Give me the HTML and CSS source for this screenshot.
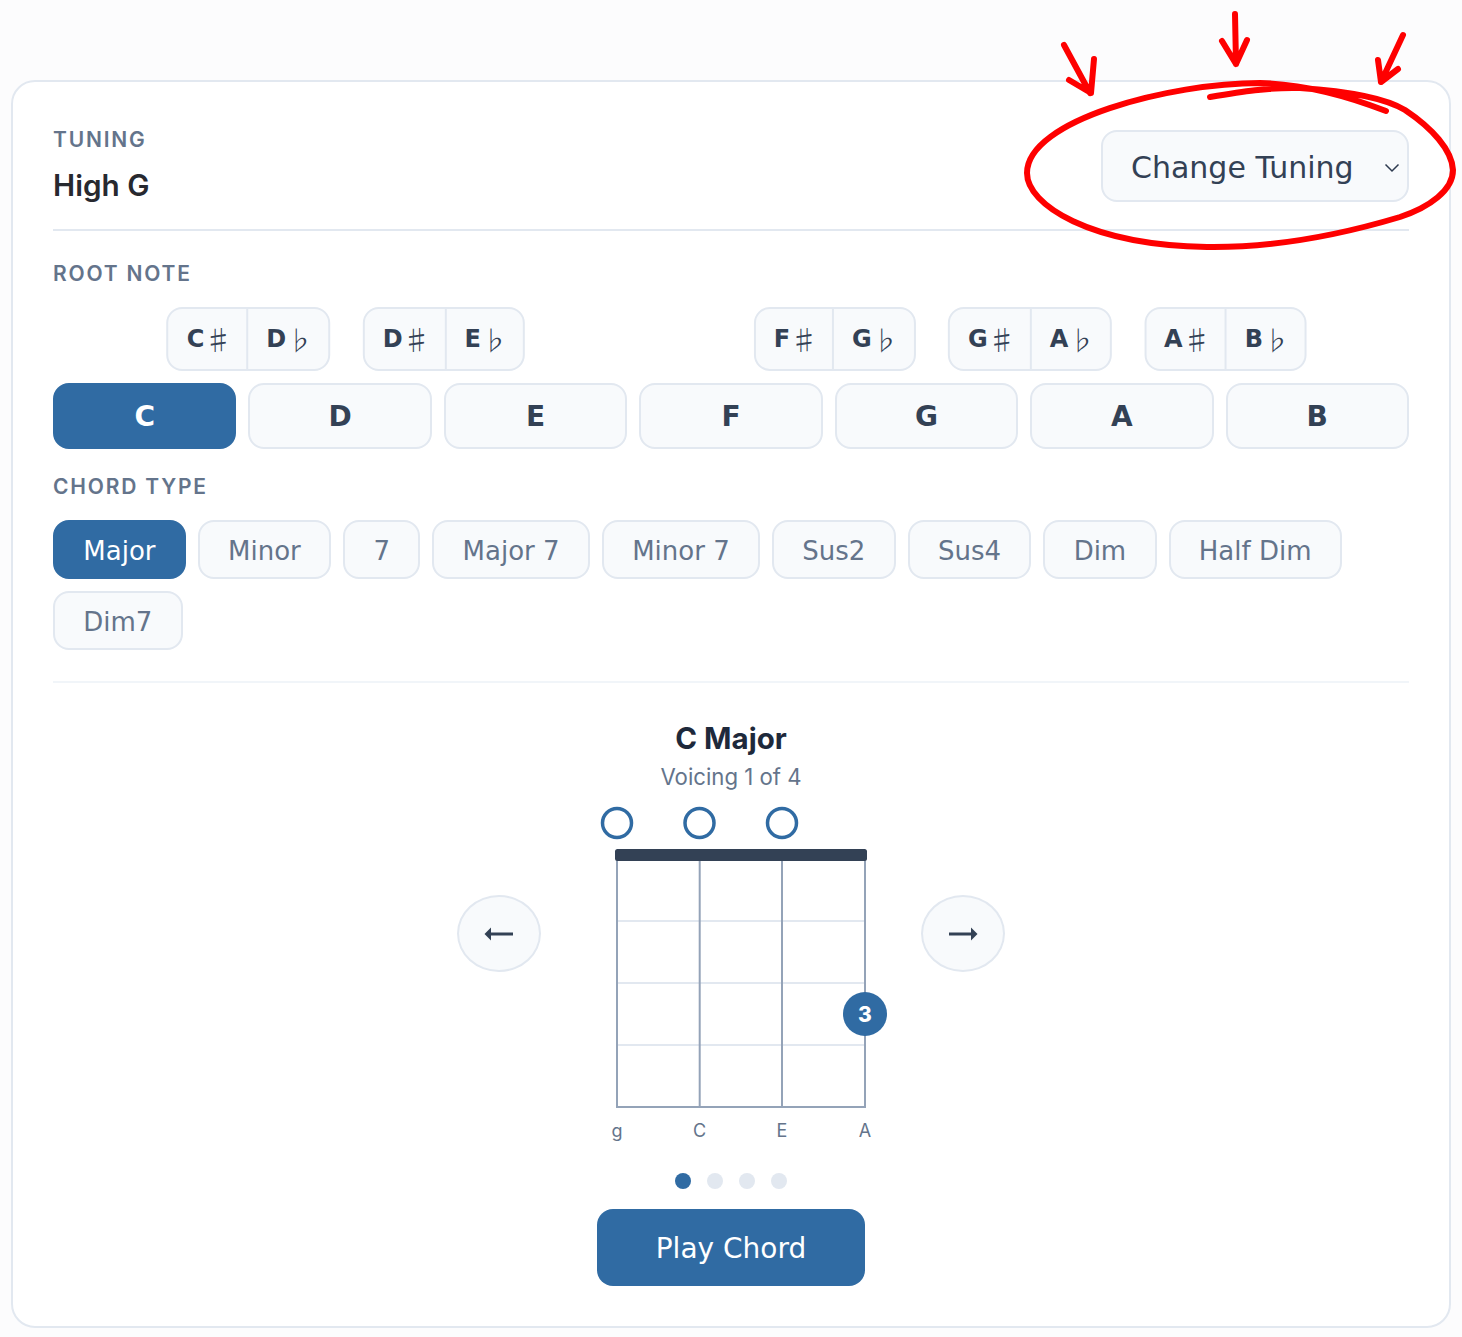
FILE: index.html
```html
<!DOCTYPE html>
<html lang="en">
<head>
<meta charset="utf-8">
<title>Chord Finder</title>
<link rel="stylesheet" href="styles.css">
</head>
<body>
<main class="card">
  <header class="tuning">
    <div>
      <div class="label">TUNING</div>
      <div class="tuning-name">High G</div>
    </div>
    <button class="select">
      <span>Change Tuning</span>
      <svg class="chev" width="16" height="10" viewBox="0 0 16 10"><path d="M1.5 1.5 L8 8 L14.5 1.5" fill="none" stroke="#2d3a4f" stroke-width="1.5"/></svg>
    </button>
  </header>

  <section class="root">
    <div class="label">ROOT NOTE</div>
    <div class="accidentals">
      <div class="pair col2"><button><span>C</span><i class="sh">♯</i></button><button><span>D</span><i class="fl">♭</i></button></div>
      <div class="pair col3"><button><span>D</span><i class="sh">♯</i></button><button><span>E</span><i class="fl">♭</i></button></div>
      <div class="pair col5"><button><span>F</span><i class="sh">♯</i></button><button><span>G</span><i class="fl">♭</i></button></div>
      <div class="pair col6"><button><span>G</span><i class="sh">♯</i></button><button><span>A</span><i class="fl">♭</i></button></div>
      <div class="pair col7"><button><span>A</span><i class="sh">♯</i></button><button><span>B</span><i class="fl">♭</i></button></div>
    </div>
    <div class="notes">
      <button class="note on">C</button>
      <button class="note">D</button>
      <button class="note">E</button>
      <button class="note">F</button>
      <button class="note">G</button>
      <button class="note">A</button>
      <button class="note">B</button>
    </div>
  </section>

  <section class="types">
    <div class="label">CHORD TYPE</div>
    <div class="pills">
      <button class="pill on">Major</button>
      <button class="pill">Minor</button>
      <button class="pill">7</button>
      <button class="pill">Major 7</button>
      <button class="pill">Minor 7</button>
      <button class="pill">Sus2</button>
      <button class="pill">Sus4</button>
      <button class="pill">Dim</button>
      <button class="pill">Half Dim</button>
      <button class="pill">Dim7</button>
    </div>
  </section>

  <section class="viewer">
    <h2 class="chord-name">C Major</h2>
    <p class="voicing">Voicing 1 of 4</p>
    <div class="stage">
      <button class="nav">
        <svg width="30" height="16" viewBox="0 0 30 16"><path d="M29 8H6" stroke="#334155" stroke-width="3"/><path d="M0.5 8 L7 1.500 V14.500 Z" fill="#334155"/></svg>
      </button>
      <svg class="diagram" width="300" height="345" viewBox="0 0 300 345">
        <g fill="none" stroke="#306ba3" stroke-width="3.5">
          <circle cx="36" cy="23" r="14.5"/>
          <circle cx="118.500" cy="23" r="14.5"/>
          <circle cx="201" cy="23" r="14.500"/>
        </g>
        <g stroke="#e2e8f0" stroke-width="2">
          <path d="M36 121H284M36 183H284M36 245H284"/>
        </g>
        <g stroke="#94a3b8" stroke-width="2" fill="none">
          <path d="M36 55V307H284V55M118.700 55V307M201 55V307"/>
        </g>
        <rect x="34" y="49" width="252" height="12" rx="2.500" fill="#334155"/>
        <circle cx="284" cy="214" r="22" fill="#306ba3"/>
        <text x="284" y="222" class="finger">3</text>
        <g class="string">
          <text x="36" y="337">g</text>
          <text x="118.500" y="337">C</text>
          <text x="201" y="337">E</text>
          <text x="284" y="337">A</text>
        </g>
      </svg>
      <button class="nav">
        <svg width="30" height="16" viewBox="0 0 30 16"><path d="M1 8H24" stroke="#334155" stroke-width="3"/><path d="M29.500 8 L23 1.500 V14.500 Z" fill="#334155"/></svg>
      </button>
    </div>
    <div class="dots"><span class="dot on"></span><span class="dot"></span><span class="dot"></span><span class="dot"></span></div>
    <button class="play">Play Chord</button>
  </section>
</main>

<svg class="scribble" width="462" height="260" viewBox="1000 0 462 260">
  <g fill="none" stroke="#fe0000" stroke-width="6" stroke-linecap="round" stroke-linejoin="round">
    <path d="M1386 111 C1345 95 1305 84 1260 83 C1170 83 1027 120 1027 173 C1027 205 1090 245 1207 247 C1280 248 1350 232 1400 217 C1430 207 1453 190 1453 170 C1452 150 1432 128 1405 110 C1385 98 1345 91 1300 88 C1270 87 1240 92 1210 97"/>
    <path d="M1064 45 L1090 93 M1094 59 L1091 93 L1069 80"/>
    <path d="M1235 14 L1236 64 M1222 41 L1236 64 L1247 40"/>
    <path d="M1403 35 L1381 82 M1378 60 L1381 82 L1398 69"/>
  </g>
</svg>
</body>
</html>
```
FILE: styles.css
```css
* { box-sizing: border-box; }
html, body { margin: 0; padding: 0; }
body {
  background: #fcfcfd;
  font-family: "DejaVu Sans", sans-serif;
  color: #334155;
  padding: 80px 11px 9px 11px;
  position: relative;
  height: 1337px;
  overflow: hidden;
}
button { font-family: inherit; cursor: pointer; margin: 0; }

.card {
  background: #fff;
  border: 2px solid #e2e8f0;
  border-radius: 24px;
  height: 1248px;
  padding: 44px 40px 0 40px;
}

.tuning {
  display: flex;
  justify-content: space-between;
  align-items: flex-end;
  padding-bottom: 26px;
  border-bottom: 2px solid #e2e8f0;
}
.label {
  font-family: Inter, sans-serif;
  font-size: 21px;
  line-height: 28px;
  font-weight: 600;
  letter-spacing: 1.8px;
  color: #64748b;
}
.tuning-name {
  font-family: Inter, sans-serif;
  font-size: 29.700px;
  font-weight: 600;
  line-height: 36px;
  color: #27292f;
  margin-top: 13px;
}
.select {
  width: 308px;
  height: 72px;
  margin-bottom: 1px;
  border: 2px solid #e2e8f0;
  border-radius: 16px;
  background: #f8fafc;
  color: #334155;
  font-size: 30px;
  display: flex;
  align-items: center;
  padding: 3px 7px 0 28px;
  justify-content: space-between;
}

.root { padding-top: 29px; }
.accidentals, .notes {
  display: grid;
  grid-template-columns: repeat(7, 1fr);
  column-gap: 12px;
}
.accidentals { margin-top: 19px; height: 64px; }
.pair {
  display: flex;
  justify-self: start;
  transform: translateX(-50%);
  height: 64px;
  grid-row: 1;
  background: #f8fafc;
  border: 2px solid #e2e8f0;
  border-radius: 16px;
  overflow: hidden;
}
.col2 { grid-column: 2; }
.col3 { grid-column: 3; }
.col5 { grid-column: 5; }
.col6 { grid-column: 6; }
.col7 { grid-column: 7; }
.pair button {
  display: flex;
  align-items: center;
  border: 0;
  background: none;
  font-size: 24px;
  font-weight: 700;
  color: #334155;
  padding: 0 14px 0 18px;
  white-space: nowrap;
}
.pair button + button { border-left: 2px solid #e2e8f0; padding: 0 15px 0 18px; }
.pair i {
  font-family: "Noto Sans CJK JP", sans-serif;
  font-style: normal;
  font-weight: 300;
  line-height: 1;
}
.pair .sh { font-size: 28px; }
.pair .fl { font-size: 27px; }
.notes { margin-top: 12px; }
.note {
  height: 66px;
  border: 2px solid #e2e8f0;
  border-radius: 16px;
  background: #f8fafc;
  color: #334155;
  font-size: 28px;
  font-weight: 700;
  padding-top: 2px;
}
.note.on { background: #306ba3; border-color: #306ba3; color: #fff; }

.types { padding-top: 24px; }
.pills {
  display: flex;
  flex-wrap: wrap;
  gap: 12px;
  margin-top: 19px;
}
.pill {
  height: 59px;
  padding: 3px 28.300px 0;
  border: 2px solid #e2e8f0;
  border-radius: 16px;
  background: #f8fafc;
  color: #64748b;
  font-size: 26px;
}
.pill.on { background: #306ba3; border-color: #306ba3; color: #fff; }

.viewer {
  margin-top: 31px;
  border-top: 2px solid #f1f5f9;
  padding-top: 36px;
  display: flex;
  flex-direction: column;
  align-items: center;
}
.chord-name {
  margin: 0;
  font-family: Inter, sans-serif;
  font-size: 29.500px;
  line-height: 38px;
  font-weight: 700;
  color: #1e293b;
}
.voicing {
  margin: 6px 0 0;
  font-family: Inter, sans-serif;
  font-size: 22.200px;
  line-height: 28px;
  color: #64748b;
}
.stage {
  display: flex;
  align-items: flex-start;
  gap: 40px;
  margin-top: 9px;
}
.nav {
  width: 84px;
  height: 77px;
  margin-top: 95px;
  border-radius: 50%;
  border: 2px solid #e2e8f0;
  background: #f8fafc;
  padding: 0;
  display: flex;
  align-items: center;
  justify-content: center;
}
.diagram { display: block; flex: none; overflow: visible; }
.finger {
  font-family: Inter, sans-serif;
  font-size: 21px;
  font-weight: 800;
  fill: #fff;
  text-anchor: middle;
}
.string text {
  font-family: Inter, sans-serif;
  font-size: 18px;
  fill: #64748b;
  text-anchor: middle;
}
.dots {
  display: flex;
  gap: 16px;
  margin-top: 28px;
}
.dot { width: 16px; height: 16px; border-radius: 50%; background: #e2e8f0; }
.dot.on { background: #306ba3; }
.play {
  margin-top: 20px;
  width: 268px;
  height: 77px;
  border: 0;
  border-radius: 16px;
  background: #306ba3;
  color: #fff;
  font-size: 28px;
  padding-top: 2px;
}

.scribble {
  position: absolute;
  top: 0;
  right: 0;
  pointer-events: none;
}
```
